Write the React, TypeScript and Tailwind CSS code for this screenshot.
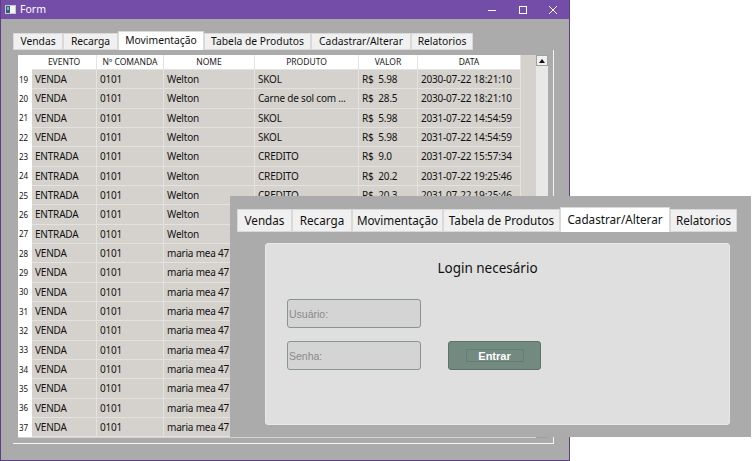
type Row = [number, string, string, string, string, string, string];

const rows: Row[] = [
  [19, "VENDA", "0101", "Welton", "SKOL", "R$  5.98", "2030-07-22 18:21:10"],
  [20, "VENDA", "0101", "Welton", "Carne de sol com ...", "R$  28.5", "2030-07-22 18:21:10"],
  [21, "VENDA", "0101", "Welton", "SKOL", "R$  5.98", "2031-07-22 14:54:59"],
  [22, "VENDA", "0101", "Welton", "SKOL", "R$  5.98", "2031-07-22 14:54:59"],
  [23, "ENTRADA", "0101", "Welton", "CREDITO", "R$  9.0", "2031-07-22 15:57:34"],
  [24, "ENTRADA", "0101", "Welton", "CREDITO", "R$  20.2", "2031-07-22 19:25:46"],
  [25, "ENTRADA", "0101", "Welton", "CREDITO", "R$  20.3", "2031-07-22 19:25:46"],
  [26, "ENTRADA", "0101", "Welton", "CREDITO", "R$  10.0", "2031-07-22 19:30:12"],
  [27, "ENTRADA", "0101", "Welton", "CREDITO", "R$  15.0", "2031-07-22 19:31:40"],
  [28, "VENDA", "0101", "maria mea 47", "SKOL", "R$  5.98", "2031-07-23 10:02:11"],
  [29, "VENDA", "0101", "maria mea 47", "SKOL", "R$  5.98", "2031-07-23 10:02:11"],
  [30, "VENDA", "0101", "maria mea 47", "SKOL", "R$  5.98", "2031-07-23 10:05:31"],
  [31, "VENDA", "0101", "maria mea 47", "SKOL", "R$  5.98", "2031-07-23 10:05:31"],
  [32, "VENDA", "0101", "maria mea 47", "SKOL", "R$  5.98", "2031-07-23 10:08:02"],
  [33, "VENDA", "0101", "maria mea 47", "SKOL", "R$  5.98", "2031-07-23 10:08:02"],
  [34, "VENDA", "0101", "maria mea 47", "SKOL", "R$  5.98", "2031-07-23 10:12:45"],
  [35, "VENDA", "0101", "maria mea 47", "SKOL", "R$  5.98", "2031-07-23 10:12:45"],
  [36, "VENDA", "0101", "maria mea 47", "SKOL", "R$  5.98", "2031-07-23 10:15:20"],
  [37, "VENDA", "0101", "maria mea 47", "SKOL", "R$  5.98", "2031-07-23 10:15:20"],
];

const cols = [
  { label: "EVENTO", w: "w-[65px]" },
  { label: "Nº COMANDA", w: "w-[67px]" },
  { label: "NOME", w: "w-[91px]" },
  { label: "PRODUTO", w: "w-[104px]" },
  { label: "VALOR", w: "w-[59px]" },
  { label: "DATA", w: "w-[103px]" },
];

const mainTabs = [
  { label: "Vendas", w: "w-[50px]" },
  { label: "Recarga", w: "w-[55px]" },
  { label: "Movimentação", w: "w-[86px]", active: true },
  { label: "Tabela de Produtos", w: "w-[107px]" },
  { label: "Cadastrar/Alterar", w: "w-[100px]" },
  { label: "Relatorios", w: "w-[62px]" },
];

const loginTabs = [
  { label: "Vendas", w: "w-[55px]" },
  { label: "Recarga", w: "w-[60px]" },
  { label: "Movimentação", w: "w-[91px]" },
  { label: "Tabela de Produtos", w: "w-[117px]" },
  { label: "Cadastrar/Alterar", w: "w-[110px]", active: true },
  { label: "Relatorios", w: "w-[67px]" },
];

function TitleBar() {
  return (
    <div className="flex h-[19px] items-center bg-[#744da9] text-white">
      <svg width="11" height="9" viewBox="0 0 11 9" className="ml-[4px]">
        <rect x="0.5" y="0.5" width="10" height="8" fill="#f4f4f4" stroke="#c9c9c9" />
        <rect x="1" y="1" width="4" height="7" fill="#2f6171" />
        <rect x="2" y="2" width="2" height="3" fill="#7fb6c4" />
      </svg>
      <span className="ml-[4px] text-[10.5px]">Form</span>
      <div className="ml-auto flex items-center">
        <svg width="10" height="10" viewBox="0 0 10 10" className="mr-[21px]">
          <line x1="1" y1="5.5" x2="9" y2="5.5" stroke="white" strokeWidth="1" />
        </svg>
        <svg width="10" height="10" viewBox="0 0 10 10" className="mr-[20px]">
          <rect x="1.5" y="1.5" width="7" height="7" fill="none" stroke="white" strokeWidth="1" />
        </svg>
        <svg width="10" height="10" viewBox="0 0 10 10" className="mr-[11px]">
          <path d="M1 1 L9 9 M9 1 L1 9" stroke="white" strokeWidth="1" />
        </svg>
      </div>
    </div>
  );
}

function MovTable() {
  return (
    <div className="flex h-[383px] w-[530px] bg-[#d5d2cd]">
      <div className="flex w-[518px] flex-col">
        {/* Header */}
        <div className="flex h-[15px] bg-white text-[8.5px] text-[#1a1a1a]">
          <div className="w-[14px]" />
          {cols.map((c) => (
            <div
              key={c.label}
              className={`${c.w} flex items-center justify-center border-r border-b border-[#e3e3e3]`}
            >
              {c.label}
            </div>
          ))}
          <div className="flex-1 bg-[#d5d2cd]" />
        </div>

        {rows.map((r) => (
          <div key={r[0]} className="flex h-[19.33px] text-[10px] tracking-[-0.2px] text-[#111]">
            <div className="flex w-[14px] items-center bg-white pl-[1px] text-[8px] tracking-normal">
              {r[0]}
            </div>
            {r.slice(1).map((cell, i) => (
              <div
                key={i}
                className={`${cols[i].w} flex items-center overflow-hidden whitespace-pre border-r border-b border-[#e4e2de] px-[3px] leading-none`}
              >
                {cell}
              </div>
            ))}
          </div>
        ))}
      </div>

      {/* Scrollbar */}
      <div className="flex w-[12px] flex-col bg-[#e8e8e8]">
        <div className="flex h-[11px] items-center justify-center border border-[#a0a0a0] bg-[#f0f0f0]">
          <svg width="6" height="4" viewBox="0 0 6 4">
            <path d="M0 4 L3 0 L6 4 Z" fill="#111" />
          </svg>
        </div>
        <div className="flex-1" />
        <div className="flex h-[11px] items-center justify-center border border-[#a0a0a0] bg-[#f0f0f0]">
          <svg width="6" height="4" viewBox="0 0 6 4">
            <path d="M0 0 L3 4 L6 0 Z" fill="#111" />
          </svg>
        </div>
      </div>
    </div>
  );
}

function MainWindow() {
  return (
    <div className="flex h-[461px] w-[570px] flex-col border-x border-b border-[#5c3d86] bg-[#ababab]">
      <TitleBar />
      <div className="flex flex-col pl-[12px] pt-[12px]">
        {/* Tabs */}
        <div className="flex h-[19px] items-end whitespace-nowrap text-[10.3px] text-[#111]">
          {mainTabs.map((t) =>
            t.active ? (
              <div
                key={t.label}
                className={`${t.w} flex h-[19px] items-center justify-center border-x border-t border-[#d9d9d9] bg-white`}
              >
                {t.label}
              </div>
            ) : (
              <div
                key={t.label}
                className={`${t.w} flex h-[17px] items-center justify-center border border-[#d9d9d9] bg-[#f0f0f0]`}
              >
                {t.label}
              </div>
            )
          )}
        </div>

        {/* Pane */}
        <div className="h-[394px] w-[541px] border-r border-b border-[#f4f4f4] pl-[5px] pt-[5px]">
          <MovTable />
        </div>
      </div>
    </div>
  );
}

function LoginWindow() {
  return (
    <div className="absolute left-[230px] top-[196px] flex h-[241px] w-[521px] flex-col bg-[#ababab] pl-[7px] pt-[11px]">
      <div className="flex h-[25px] items-end whitespace-nowrap text-[11.7px] text-[#111]">
        {loginTabs.map((t) =>
          t.active ? (
            <div
              key={t.label}
              className={`${t.w} flex h-[25px] items-center justify-center border-x border-t border-[#d9d9d9] bg-white`}
            >
              {t.label}
            </div>
          ) : (
            <div
              key={t.label}
              className={`${t.w} flex h-[23px] items-center justify-center border border-[#d9d9d9] bg-[#f0f0f0]`}
            >
              {t.label}
            </div>
          )
        )}
      </div>

      <div className="pl-[28px] pt-[11px]">
        <div className="flex h-[182px] w-[465px] flex-col rounded-[3px] border border-[#e8e8e8] bg-[#dfdfdf] pl-[21px]">
          <div className="mt-[14px] flex justify-center pr-[41px] text-[13.5px] text-[#111]">
            Login necesário
          </div>

          <input
            readOnly
            placeholder="Usuário:"
            className="mt-[21px] h-[29px] w-[134px] rounded-[3px] border border-[#87968e] bg-[#d4d4d4] pl-[1px] font-['Liberation_Sans',sans-serif] text-[10.5px] outline-none placeholder:text-[#8a8a8a]"
          />

          <div className="mt-[13px] flex items-center">
            <input
              readOnly
              placeholder="Senha:"
              className="h-[29px] w-[134px] rounded-[3px] border border-[#87968e] bg-[#d4d4d4] pl-[1px] font-['Liberation_Sans',sans-serif] text-[10.5px] outline-none placeholder:text-[#8a8a8a]"
            />
            <button className="ml-[27px] flex h-[29px] w-[93px] items-center justify-center rounded-[3px] border border-[#5f736a] bg-[#728a80]">
              <span className="flex h-[13px] w-[58px] items-center justify-center border border-[#667d73] font-['Liberation_Sans',sans-serif] text-[11px] font-bold text-white">
                Entrar
              </span>
            </button>
          </div>
        </div>
      </div>
    </div>
  );
}

export default function App() {
  return (
    <div className="relative h-[461px] w-[754px] overflow-hidden bg-white font-['Noto_Sans',sans-serif]">
      <MainWindow />
      <LoginWindow />
    </div>
  );
}
